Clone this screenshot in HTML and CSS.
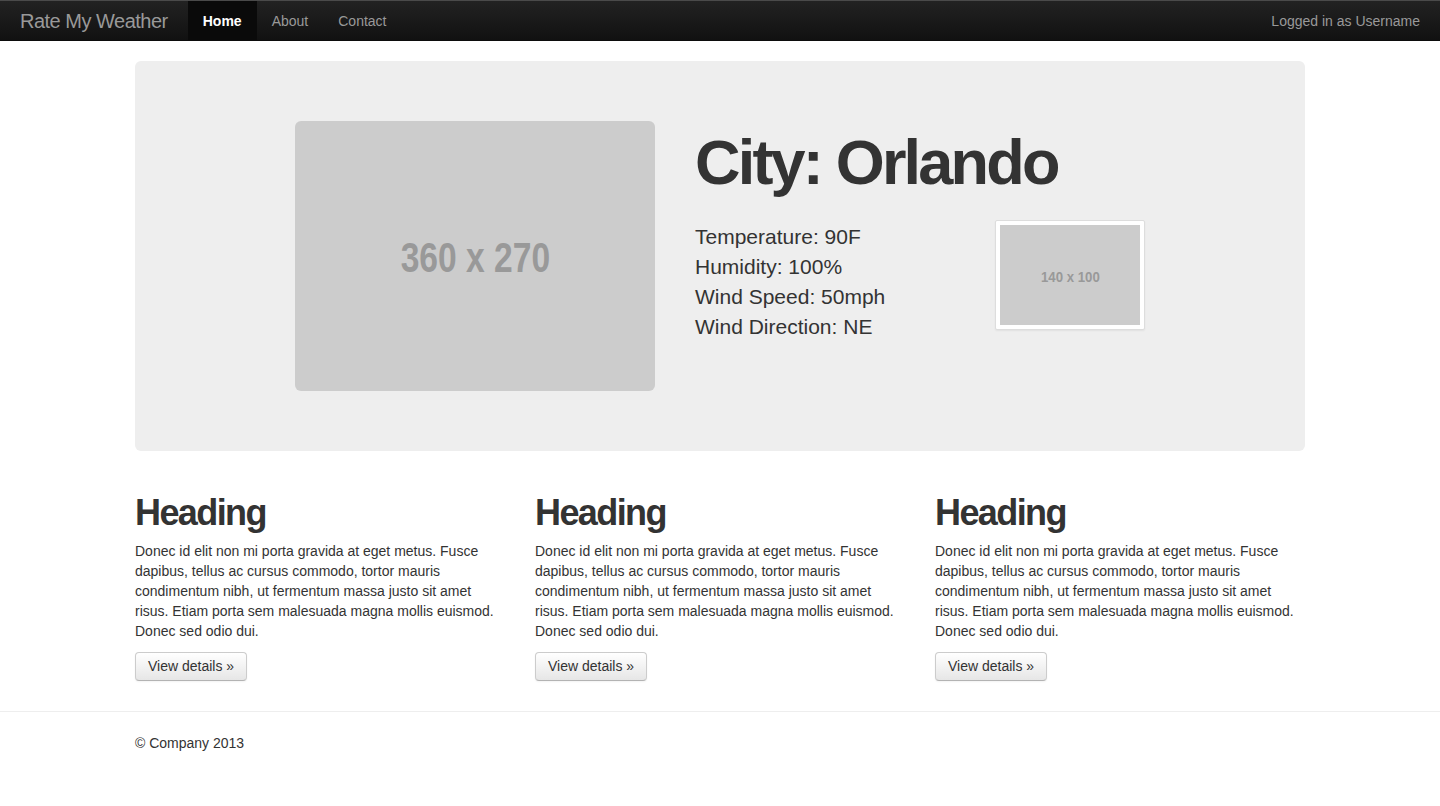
FILE: index.html
```html
<!DOCTYPE html>
<html lang="en">
<head>
<meta charset="utf-8">
<title>Rate My Weather</title>
<link rel="stylesheet" href="styles.css">
</head>
<body>
<header class="navbar">
  <div class="nav-left">
    <a class="brand" href="#">Rate My Weather</a>
    <ul class="nav">
      <li class="active"><a href="#">Home</a></li>
      <li><a href="#">About</a></li>
      <li><a href="#">Contact</a></li>
    </ul>
  </div>
  <div class="nav-right">Logged in as Username</div>
</header>

<main class="container">
  <section class="jumbotron">
    <div class="placeholder big"><span>360 x 270</span></div>
    <div class="city">
      <h1>City: Orlando</h1>
      <div class="city-row">
        <ul class="details">
          <li>Temperature: 90F</li>
          <li>Humidity: 100%</li>
          <li>Wind Speed: 50mph</li>
          <li>Wind Direction: NE</li>
        </ul>
        <div class="thumbnail"><div class="placeholder small"><span>140 x 100</span></div></div>
      </div>
    </div>
  </section>

  <section class="cols">
    <div class="col">
      <h2>Heading</h2>
      <p>Donec id elit non mi porta gravida at eget metus. Fusce dapibus, tellus ac cursus commodo, tortor mauris condimentum nibh, ut fermentum massa justo sit amet risus. Etiam porta sem malesuada magna mollis euismod. Donec sed odio dui.</p>
      <a class="btn" href="#">View details &raquo;</a>
    </div>
    <div class="col">
      <h2>Heading</h2>
      <p>Donec id elit non mi porta gravida at eget metus. Fusce dapibus, tellus ac cursus commodo, tortor mauris condimentum nibh, ut fermentum massa justo sit amet risus. Etiam porta sem malesuada magna mollis euismod. Donec sed odio dui.</p>
      <a class="btn" href="#">View details &raquo;</a>
    </div>
    <div class="col">
      <h2>Heading</h2>
      <p>Donec id elit non mi porta gravida at eget metus. Fusce dapibus, tellus ac cursus commodo, tortor mauris condimentum nibh, ut fermentum massa justo sit amet risus. Etiam porta sem malesuada magna mollis euismod. Donec sed odio dui.</p>
      <a class="btn" href="#">View details &raquo;</a>
    </div>
  </section>
</main>

<hr class="rule">
<footer class="container footer">&copy; Company 2013</footer>
</body>
</html>
```

FILE: styles.css
```css
* { box-sizing: border-box; }
html, body { margin: 0; padding: 0; background: #fff; }
body {
  font-family: "Liberation Sans", Arial, sans-serif;
  font-size: 14px;
  line-height: 20px;
  color: #333;
}
a { text-decoration: none; }

.navbar {
  height: 41px;
  display: flex;
  justify-content: space-between;
  align-items: stretch;
  background: linear-gradient(#222, #111);
  border-top: 1px solid #4a4a4a;
  border-bottom: 1px solid #0c0c0c;
}
.nav-left { display: flex; align-items: stretch; }
.brand {
  display: block;
  padding: 8px 20px 0 20px;
  font-size: 20px;
  line-height: 24px;
  letter-spacing: -0.5px;
  color: #999;
}
.nav { list-style: none; margin: 0; padding: 0; display: flex; }
.nav li a {
  display: block;
  height: 100%;
  padding: 10px 15px 0;
  color: #999;
  line-height: 20px;
}
.nav li.active a { background: #0a0a0a; color: #fff; font-weight: bold; }
.nav-right {
  padding: 10px 20px 0 0;
  color: #999;
  line-height: 20px;
}

.container { width: 1170px; margin: 0 auto; }

.jumbotron {
  margin-top: 20px;
  background: #eee;
  border-radius: 6px;
  padding: 60px 160px;
  display: flex;
  gap: 40px;
}
.placeholder {
  background: #ccc;
  display: flex;
  align-items: center;
  justify-content: center;
  color: #999;
  font-family: "Liberation Sans", Arial, sans-serif;
  font-weight: bold;
}
.placeholder span { display: inline-block; white-space: nowrap; }
.placeholder.big {
  width: 360px;
  height: 270px;
  flex: none;
  border-radius: 6px;
  font-size: 42px;
}
.placeholder.big span { transform: translateY(2px) scaleX(0.8); }
.placeholder.small {
  width: 140px;
  height: 100px;
  font-size: 15px;
}
.placeholder.small span { transform: translateY(2px) scaleX(0.88); }
.city { flex: 1; }
.city h1 {
  margin: 7px 0 25px;
  font-size: 63px;
  line-height: 69px;
  font-weight: bold;
  letter-spacing: -2.8px;
  color: #333;
}
.city-row { display: flex; margin-top: -2px; }
.details {
  list-style: none;
  margin: 0;
  padding: 0;
  width: 300px;
  font-size: 21px;
  line-height: 30px;
  font-weight: 300;
  color: #333;
  padding-top: 2px;
}
.thumbnail {
  flex: none;
  width: 150px;
  height: 110px;
  padding: 4px;
  background: #fff;
  border: 1px solid #ddd;
  border-radius: 2px;
  box-shadow: 0 1px 2px rgba(0,0,0,0.06);
}

.cols {
  display: grid;
  grid-template-columns: repeat(3, 370px);
  column-gap: 30px;
  margin-top: 42px;
}
.col h2 {
  margin: 0 0 8px;
  font-size: 36px;
  line-height: 40px;
  font-weight: bold;
  letter-spacing: -1.6px;
  color: #333;
}
.col p { margin: 0 0 11px; }
.btn {
  display: inline-block;
  padding: 4px 12px;
  line-height: 19px;
  font-size: 14px;
  color: #333;
  background: linear-gradient(#fff, #e6e6e6);
  border: 1px solid #ccc;
  border-bottom-color: #b3b3b3;
  border-radius: 4px;
  box-shadow: inset 0 1px 0 rgba(255,255,255,.2), 0 1px 2px rgba(0,0,0,.05);
}

.rule {
  margin: 30px 0 0;
  border: 0;
  border-top: 1px solid #eee;
}
.footer { padding: 21px 0 40px; }
```
